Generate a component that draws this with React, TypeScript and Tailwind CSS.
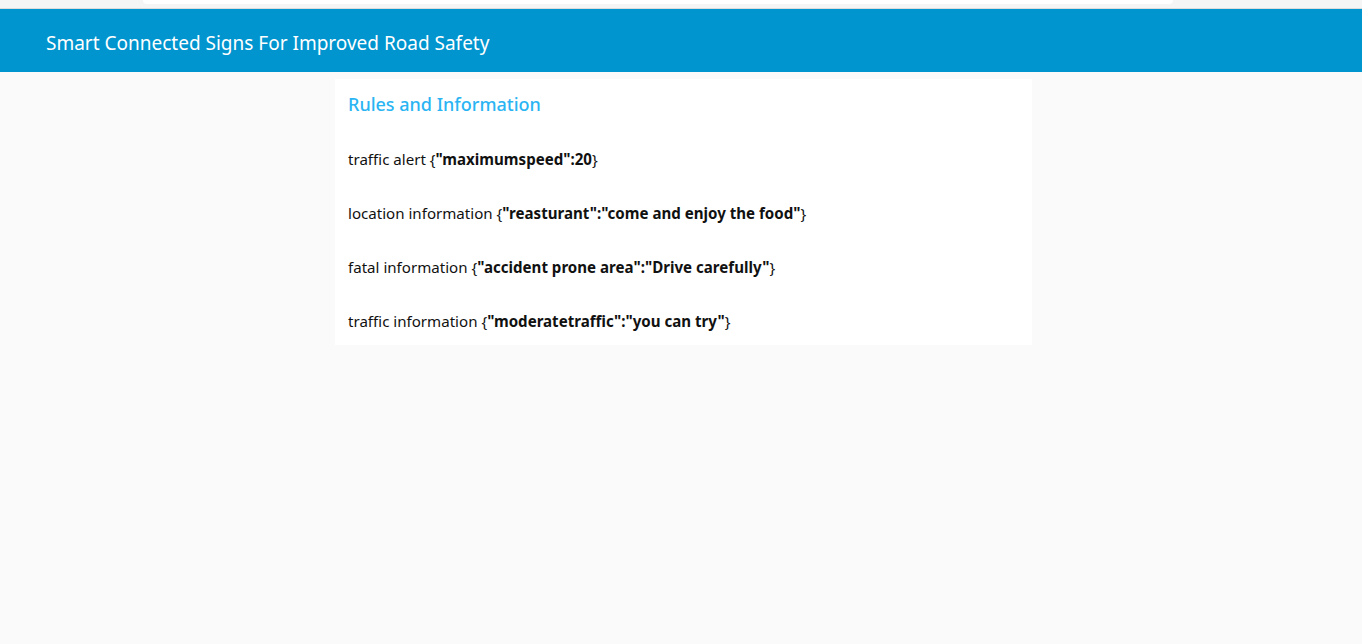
import React from 'react';

const rules = [
  { label: 'traffic alert', key: 'maximumspeed', value: '20', quoted: false },
  { label: 'location information', key: 'reasturant', value: 'come and enjoy the food', quoted: true },
  { label: 'fatal information', key: 'accident prone area', value: 'Drive carefully', quoted: true },
  { label: 'traffic information', key: 'moderatetraffic', value: 'you can try', quoted: true },
];

export default function App() {
  return (
    <div className="min-h-[644px] bg-[#fafafa] font-['Noto_Sans',sans-serif] text-[#111]">
      {/* top strip */}
      <div className="h-[9px] bg-[#f5f5f5] border-b border-[#dcdcdc] flex">
        <div className="ml-[143px] w-[1030px] h-[4px] bg-white rounded-b-[4px]" />
      </div>

      {/* Header */}
      <header className="h-[63px] bg-[#0095cf] flex items-center px-[46px] pt-[5px]">
        <h1 className="text-white text-[19px]">
          Smart Connected Signs For Improved Road Safety
        </h1>
      </header>

      {/* Card */}
      <div className="w-[697px] ml-[335px] mt-[7px] bg-white px-[13px] pt-[13px] pb-[14px]">
        <h2 className="text-[#2ab4f3] text-[18px] leading-[24px] font-medium">Rules and Information</h2>
        {rules.map(r => (
          <p key={r.key} className="mt-[33px] text-[15.1px] leading-[20px] [&+p]:mt-[34px]">
            {r.label} {'{'}
            <span className="font-bold">
              "{r.key}":{r.quoted ? `"${r.value}"` : r.value}
            </span>
            {'}'}
          </p>
        ))}
      </div>
    </div>
  );
}
